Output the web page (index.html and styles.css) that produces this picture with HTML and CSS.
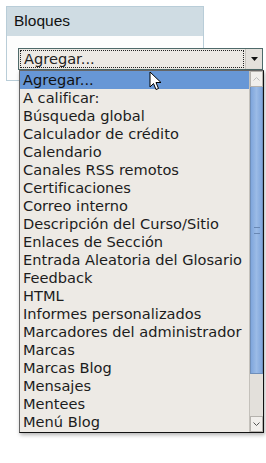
FILE: index.html
```html
<!DOCTYPE html>
<html lang="es">
<head>
    <meta charset="UTF-8">
    <title>Bloques</title>
    <link rel="stylesheet" href="styles.css">
</head>
<body>
    <div class="block">
        <div class="block-header">Bloques</div>
        <div class="block-body">
            <div class="select">
                <span class="select-value">Agregar...</span>
                <span class="select-arrow">
                    <svg width="7" height="4" viewBox="0 0 7 4"><path d="M0 0h7L3.5 4z" fill="#111"/></svg>
                </span>
            </div>
        </div>
    </div>

    <div class="dropdown">
        <ul class="options">
            <li class="selected">Agregar...</li>
            <li>A calificar:</li>
            <li>Búsqueda global</li>
            <li>Calculador de crédito</li>
            <li>Calendario</li>
            <li>Canales RSS remotos</li>
            <li>Certificaciones</li>
            <li>Correo interno</li>
            <li>Descripción del Curso/Sitio</li>
            <li>Enlaces de Sección</li>
            <li>Entrada Aleatoria del Glosario</li>
            <li>Feedback</li>
            <li>HTML</li>
            <li>Informes personalizados</li>
            <li>Marcadores del administrador</li>
            <li>Marcas</li>
            <li>Marcas Blog</li>
            <li>Mensajes</li>
            <li>Mentees</li>
            <li>Menú Blog</li>
        </ul>
        <div class="scrollbar">
            <div class="scroll-btn">
                <svg width="7" height="4" viewBox="0 0 7 4"><path d="M0.5 3.5L3.5 0.5L6.5 3.5" fill="none" stroke="#bbb" stroke-width="1"/></svg>
            </div>
            <div class="scroll-track">
                <div class="scroll-thumb">
                    <span class="grip"></span>
                </div>
            </div>
            <div class="scroll-btn">
                <svg width="7" height="4" viewBox="0 0 7 4"><path d="M0.5 0.5L3.5 3.5L6.5 0.5" fill="none" stroke="#555" stroke-width="1"/></svg>
            </div>
        </div>
    </div>

    <svg class="cursor" width="13" height="20" viewBox="0 0 13 20">
        <path d="M1 1v15l3.5-3.5 2.5 6 2.5-1-2.5-6H12z" fill="#fff" stroke="#000" stroke-width="1" stroke-linejoin="round"/>
    </svg>
</body>
</html>
```

FILE: styles.css
```css
body {
    margin: 0;
    padding: 6px;
    background: #fff;
    font-family: "DejaVu Sans", sans-serif;
}
.block {
    width: 196px;
    height: 73px;
    border: 1px solid #b9cdd8;
    background: #fdfdfd;
}
.block-header {
    height: 29px;
    background: #cfdce3;
    font-family: "Liberation Sans", Arial, sans-serif;
    font-size: 15.5px;
    line-height: 28px;
    padding-left: 7px;
    color: #111;
}
.block-body {
    padding: 12px 0 0 11px;
}
.select {
    display: flex;
    width: 243px;
    height: 20px;
    border: 1px solid #4f6a6a;
    background: #ece9e4;
}
.select-value {
    flex: 1;
    margin: 1px;
    border: 1px dotted #222;
    font-size: 14.6px;
    line-height: 16px;
    padding-left: 3px;
    color: #222;
}
.select-arrow {
    width: 16px;
    display: flex;
    align-items: center;
    justify-content: center;
    background: #e4e1dc;
    border-left: 1px solid #c9c5bf;
}
.dropdown {
    position: absolute;
    left: 19px;
    top: 70px;
    width: 243px;
    height: 361px;
    display: flex;
    background: #edeae5;
    border: 1px solid #666;
    border-right-color: #111;
    border-bottom-color: #111;
    box-shadow: 1px 2px 4px rgba(0,0,0,0.3);
}
.options {
    flex: 1;
    list-style: none;
    margin: 0;
    padding: 0;
    font-size: 14.6px;
    color: #1c1c1c;
}
.options li {
    height: 18px;
    line-height: 18px;
    padding-left: 3px;
    white-space: nowrap;
}
.options .selected {
    background: #6797d6;
    color: #111;
}
.scrollbar {
    width: 13px;
    display: flex;
    flex-direction: column;
    background: #e3e0db;
    border-left: 1px solid #c4c1bb;
}
.scroll-btn {
    height: 14px;
    display: flex;
    align-items: center;
    justify-content: center;
    background: #f1efec;
    border: 1px solid #b5b2ad;
}
.scroll-track {
    flex: 1;
}
.scroll-thumb {
    height: 286px;
    background: linear-gradient(to right, #7fa6dc, #9bbbe6 50%, #7fa6dc);
    border: 1px solid #6f8fba;
    border-top: none;
    display: flex;
    align-items: center;
    justify-content: center;
}
.grip {
    width: 6px;
    height: 5px;
    border-top: 1px solid #6887b3;
    border-bottom: 1px solid #6887b3;
    position: relative;
}
.cursor {
    position: absolute;
    left: 149px;
    top: 71px;
}
```
